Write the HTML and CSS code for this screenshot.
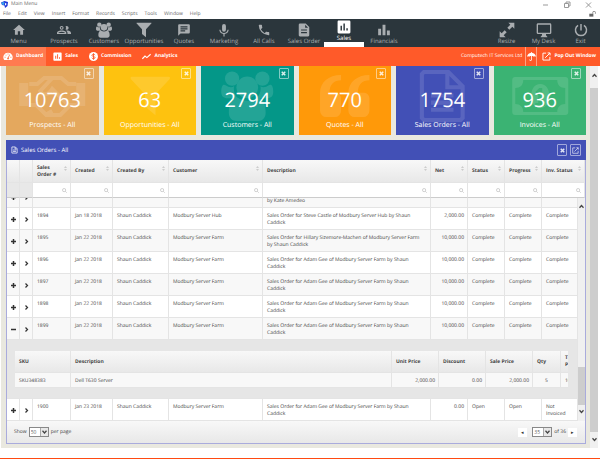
FILE: index.html
```html
<!DOCTYPE html>
<html lang="en">
<head>
    <meta charset="UTF-8">
    <meta name="viewport" content="width=device-width, initial-scale=1.0">
    <title>Main Menu</title>
    <link rel="stylesheet" href="styles.css">
</head>
<body>
    <svg class="sprite" aria-hidden="true">
        <symbol id="i-home" viewBox="0 0 24 24"><path d="M10 20v-6h4v6h5v-8h3L12 3 2 12h3v8z"/></symbol>
        <symbol id="i-people" viewBox="0 0 24 24"><path fill-rule="evenodd" d="M8 5a3.300 3.300 0 1 0 0 6.600a3.300 3.300 0 1 0 0-6.600zM8 6.800a1.500 1.500 0 1 1 0 3a1.500 1.500 0 1 1 0-3zM16.500 5a3.300 3.300 0 1 1-1.800 6a5 5 0 0 0 0-5.400a3.300 3.300 0 0 1 1.800-.6zM8 13c-2.500 0-8 1-8 4v2h16v-2c0-3-5.500-4-8-4zM2 17.200c0-1 3-2.400 6-2.400s6 1.400 6 2.400zM16.500 13c3 0 7.500 1 7.500 4v2h-6v-2c0-1.700-1-3-2.500-3.900z"/></symbol>
        <symbol id="i-users" viewBox="0 0 24 24"><circle cx="5" cy="4" r="3.300"/><circle cx="19" cy="4" r="3.300"/><circle cx="12" cy="8" r="5"/><path d="M5.800 8.500c0 2 .8 3.400 1.800 4.500H3c-2 0-3-1-3-3 0-2.500.8-3.800 2-3 1.400 1 2.800 1.200 3.900.5zM18.200 8.500c0 2-.8 3.400-1.800 4.500H21c2 0 3-1 3-3 0-2.500-.8-3.800-2-3-1.400 1-2.800 1.200-3.900.5zM7.500 12.700c3 2 6 2 9 0 3 .3 4 3.300 4 7 0 2.300-1.500 3.800-3.500 3.800H7c-2 0-3.500-1.500-3.500-3.800 0-3.700 1-6.700 4-7z"/></symbol>
        <symbol id="i-filter" viewBox="0 0 24 24"><path d="M1.500 1h21c.8 0 1 .8.500 1.400L15 11v12l-6-5v-7L1 2.400C.5 1.800.7 1 1.500 1z"/></symbol>
        <symbol id="i-chat" viewBox="0 0 24 24"><path fill-rule="evenodd" d="M4 2h16a2 2 0 0 1 2 2v12a2 2 0 0 1-2 2H6l-4 4V4c0-1.100.9-2 2-2zM6 5.500v2h12v-2zM6 9v2h12V9zM6 12.500v2h8v-2z"/></symbol>
        <symbol id="i-mic" viewBox="0 0 24 24"><path d="M12 15a3.300 3.300 0 0 0 3.300-3.300V5a3.300 3.300 0 0 0-6.600 0v6.700A3.300 3.300 0 0 0 12 15zM18 11.500c0 3.500-2.800 5.500-6 5.500s-6-2-6-5.500H4c0 4 3.200 6.800 7 7.300V23h2v-4.200c3.800-.5 7-3.300 7-7.300z"/></symbol>
        <symbol id="i-phone" viewBox="0 0 24 24"><path d="M6.600 10.800a15 15 0 0 0 6.600 6.600l2.200-2.200c.3-.3.700-.4 1-.2 1.100.4 2.300.6 3.600.6.600 0 1 .4 1 1V20c0 .6-.4 1-1 1A17 17 0 0 1 3 4c0-.6.5-1 1-1h3.500c.6 0 1 .5 1 1 0 1.300.2 2.500.6 3.600.1.300 0 .7-.3 1z"/></symbol>
        <symbol id="i-doc" viewBox="0 0 24 24"><path fill-rule="evenodd" d="M6 1h9l6 6v14a2 2 0 0 1-2 2H5a2 2 0 0 1-2-2V3c0-1 1-2 3-2zM14 3v5h5zM7 11v2h10v-2zM7 15.500v2h10v-2z"/></symbol>
        <symbol id="i-file" viewBox="0 0 24 24"><path fill="none" stroke="currentColor" stroke-width="2.500" d="M3 1.500h12l6 6v15H3zM14 2v6.500h6M7 12h10M7 17h10"/></symbol>
        <symbol id="i-chart" viewBox="0 0 24 24"><path fill-rule="evenodd" d="M3 1h18a2 2 0 0 1 2 2v18a2 2 0 0 1-2 2H3a2 2 0 0 1-2-2V3c0-1.100.9-2 2-2zM6 10v8h2.500v-8zM11 6v12h2.500V6zM16 14v4h2.500v-4z"/></symbol>
        <symbol id="i-bars" viewBox="0 0 24 24"><path d="M2 10h5v11H2zM9.500 3h5v18h-5zM17 13h5v8h-5z"/></symbol>
        <symbol id="i-resize" viewBox="0 0 24 24"><path d="M14 1h9v9l-3-3-4.500 4.500-3-3L17 4zM1 14v9h9l-3-3 4.500-4.500-3-3L4 17z"/></symbol>
        <symbol id="i-desk" viewBox="0 0 24 24"><path fill-rule="evenodd" d="M3 2h18a2 2 0 0 1 2 2v12a2 2 0 0 1-2 2h-6v2l2 2v1H7v-1l2-2v-2H3a2 2 0 0 1-2-2V4c0-1.100.9-2 2-2zM3 4v12h18V4z"/></symbol>
        <symbol id="i-power" viewBox="0 0 24 24"><path fill="none" stroke="currentColor" stroke-width="2.500" d="M12 1.500V13M7 4a9.500 9.500 0 1 0 10 0"/></symbol>
        <symbol id="i-gauge" viewBox="0 0 24 24"><path fill-rule="evenodd" d="M12 2a12 12 0 0 1 10.500 18.500l-.8.500H2.300l-.8-.5A12 12 0 0 1 12 2zM3 12.500v2.500h2.500v-2.500zM5.500 7v2.500H8V7zM10.800 4v2.500h2.500V4zM18.500 12.500v2.500H21v-2.500zM15.700 6.500l-4 8a2.600 2.600 0 1 0 2.200.6l3.500-7.700z"/></symbol>
        <symbol id="i-coin" viewBox="0 0 24 24"><circle cx="12" cy="12" r="12"/><path fill="none" stroke="#ff5a29" stroke-width="2.500" d="M16 8.500C15.500 6.800 14 6 12 6c-2.300 0-4 1.100-4 3s1.500 2.500 4 3 4 1.200 4 3-1.700 3-4 3-3.700-.9-4.200-2.800M12 3.500v17"/></symbol>
        <symbol id="i-trend" viewBox="0 0 24 24"><path fill="none" stroke="currentColor" stroke-width="3" d="M1 18l7-7 5 4L23 6"/></symbol>
        <symbol id="i-umbrella" viewBox="0 0 24 24"><path d="M11 2V0h2v2c6 .5 10 4.500 11 10.500-2-2-4.500-2-6 0-1.200-1.600-3-2-5-1V20c0 5-7 5-7 0h2c0 2.300 3 2.300 3 0v-8.500c-2-1-3.800-.6-5 1-1.500-2-4-2-6 0C1 6.500 5 2.500 11 2z"/></symbol>
        <symbol id="i-popout" viewBox="0 0 24 24"><path fill="none" stroke="currentColor" stroke-width="2.500" d="M11 3H2.500v18.500H21V13M15 2.500h6.500V9M21 3L8.500 15.500"/></symbol>
        <symbol id="i-quote" viewBox="0 0 48 40"><path d="M20 0v5c-7 0-11 4-11 12h6a5 5 0 0 1 5 5v12a6 6 0 0 1-6 6H6a6 6 0 0 1-6-6V17C0 7 8 0 20 0zM47 0v5c-7 0-11 4-11 12h6a5 5 0 0 1 5 5v12a6 6 0 0 1-6 6h-8a6 6 0 0 1-6-6V17C27 7 35 0 47 0z"/></symbol>
        <symbol id="i-page" viewBox="0 0 44 51"><path fill="none" stroke="currentColor" stroke-width="4" d="M4 2h24l14 14v31l-2 2H4l-2-2V4zM27 3v14h14M11 25h22M11 32h22M11 39h22"/></symbol>
        <symbol id="i-note" viewBox="0 0 56 38"><path fill-rule="evenodd" d="M3 0h50a3 3 0 0 1 3 3v32a3 3 0 0 1-3 3H3a3 3 0 0 1-3-3V3a3 3 0 0 1 3-3zM11 3c0 5-3 8-8 8v16c5 0 8 3 8 8h34c0-5 3-8 8-8V11c-5 0-8-3-8-8z"/><path fill-rule="evenodd" d="M28 7c6 0 9 5 9 12s-3 12-9 12-9-5-9-12 3-12 9-12zM23 15l3 2v9h-3v3h10v-3h-3V11h-3z"/></symbol>
        <symbol id="i-hands" viewBox="0 0 66 42"><path d="M0 8h9v23H0zM57 8h9v23h-9z"/><path fill="none" stroke="currentColor" stroke-width="4" d="M10 9h8l7-6h8l-12 13c3 6 9 3 12-2l17 17-9 9H27L17 30h-7M33 3h9l7 6h8M57 30h-8M26 40l7-4"/></symbol>
        <symbol id="i-lock" viewBox="0 0 24 20"><path d="M1 9h14v10H1z"/><path fill="none" stroke="currentColor" stroke-width="2.500" d="M13 9V5a4.500 4.500 0 0 1 9 0v4"/></symbol>
        <symbol id="i-x" viewBox="0 0 10 10"><path fill="none" stroke="currentColor" stroke-width="3" d="M1.500 1.500l7 7M8.500 1.500l-7 7"/></symbol>
        <symbol id="i-search" viewBox="0 0 10 10"><path fill="none" stroke="currentColor" stroke-width="1.300" d="M4.200 1a3.200 3.200 0 1 0 0 6.400a3.200 3.200 0 1 0 0-6.400zM6.500 6.500L9.500 9.500"/></symbol>
        <symbol id="i-sort" viewBox="0 0 6 10"><path d="M0 4l3-4 3 4zM0 6l3 4 3-4z"/></symbol>
        <symbol id="i-plus" viewBox="0 0 10 10"><path d="M3.500 0h3v3.500H10v3H6.500V10h-3V6.500H0v-3h3.500z"/></symbol>
        <symbol id="i-minus" viewBox="0 0 10 10"><path d="M0 3.500h10v3H0z"/></symbol>
        <symbol id="i-right" viewBox="0 0 10 10"><path fill="none" stroke="currentColor" stroke-width="2.500" d="M3 1l4 4-4 4"/></symbol>
        <symbol id="i-up" viewBox="0 0 10 10"><path fill="none" stroke="currentColor" stroke-width="2.500" d="M1 7.500l4-4.500 4 4.500"/></symbol>
        <symbol id="i-down" viewBox="0 0 10 10"><path fill="none" stroke="currentColor" stroke-width="2.500" d="M1 2.500L5 7l4-4.500"/></symbol>
    </svg>

    <header class="titlebar">
        <svg class="app-icon" viewBox="0 0 14 14"><path fill="#1d35d8" d="M0 3l7-3 7 2-1 8-5 4-1-5-5-1z"/><path fill="#37a5ee" d="M1 3l6-1-1 6-4-1z"/><path fill="#fff" d="M8 4l3 1-1 4-2-1z"/></svg>
        <span>Main Menu</span>
        <svg class="win-buttons" viewBox="0 0 50 8"><path fill="none" stroke="#999" d="M1 4h5M22.500 2.500h4v4h-4zM24 2V1h4v4h-1M44 1.500l5 5M49 1.500l-5 5"/></svg>
    </header>
    <nav class="menubar">
        <a href="#">File</a>
        <a href="#">Edit</a>
        <a href="#">View</a>
        <a href="#">Insert</a>
        <a href="#">Format</a>
        <a href="#">Records</a>
        <a href="#">Scripts</a>
        <a href="#">Tools</a>
        <a href="#">Window</a>
        <a href="#">Help</a>
        <svg class="lock"><use href="#i-lock"/></svg>
    </nav>

    <nav class="navbar">
        <a class="side first" href="#"><svg><use href="#i-home"/></svg>Menu</a>
        <a href="#"><svg><use href="#i-people"/></svg>Prospects</a>
        <a href="#"><svg class="big"><use href="#i-users"/></svg>Customers</a>
        <a href="#"><svg class="big"><use href="#i-filter"/></svg>Opportunities</a>
        <a href="#"><svg><use href="#i-chat"/></svg>Quotes</a>
        <a href="#"><svg><use href="#i-mic"/></svg>Marketing</a>
        <a href="#"><svg><use href="#i-phone"/></svg>All Calls</a>
        <a href="#"><svg><use href="#i-doc"/></svg>Sales Order</a>
        <a class="active" href="#"><svg><use href="#i-chart"/></svg>Sales</a>
        <a href="#"><svg><use href="#i-bars"/></svg>Financials</a>
        <a class="side push" href="#"><svg class="big"><use href="#i-resize"/></svg>Resize</a>
        <a class="side" href="#"><svg class="big"><use href="#i-desk"/></svg>My Desk</a>
        <a class="side" href="#"><svg><use href="#i-power"/></svg>Exit</a>
    </nav>

    <nav class="subnav">
        <a class="tab current" href="#"><svg class="wide"><use href="#i-gauge"/></svg>Dashboard</a>
        <a class="tab" href="#"><svg><use href="#i-chart"/></svg>Sales</a>
        <a class="tab" href="#"><svg><use href="#i-coin"/></svg>Commission</a>
        <a class="tab" href="#"><svg><use href="#i-trend"/></svg>Analytics</a>
        <span class="company">Computech IT Services Ltd</span>
        <button class="umbrella" aria-label="Holidays"><svg><use href="#i-umbrella"/></svg></button>
        <a class="popout" href="#"><svg><use href="#i-popout"/></svg>Pop Out Window</a>
    </nav>

    <div class="workspace">
        <main class="content">
            <section class="cards">
                <div class="card prospects">
                    <svg class="art"><use href="#i-hands"/></svg>
                    <button class="close" aria-label="Close"><svg><use href="#i-x"/></svg></button>
                    <strong>10763</strong><span>Prospects - All</span>
                </div>
                <div class="card opportunities">
                    <svg class="art"><use href="#i-filter"/></svg>
                    <button class="close" aria-label="Close"><svg><use href="#i-x"/></svg></button>
                    <strong>63</strong><span>Opportunities - All</span>
                </div>
                <div class="card customers">
                    <svg class="art tall"><use href="#i-users"/></svg>
                    <button class="close" aria-label="Close"><svg><use href="#i-x"/></svg></button>
                    <strong>2794</strong><span>Customers - All</span>
                </div>
                <div class="card quotes">
                    <svg class="art"><use href="#i-quote"/></svg>
                    <button class="close" aria-label="Close"><svg><use href="#i-x"/></svg></button>
                    <strong>770</strong><span>Quotes - All</span>
                </div>
                <div class="card orders">
                    <svg class="art tall"><use href="#i-page"/></svg>
                    <button class="close" aria-label="Close"><svg><use href="#i-x"/></svg></button>
                    <strong>1754</strong><span>Sales Orders - All</span>
                </div>
                <div class="card invoices">
                    <svg class="art note"><use href="#i-note"/></svg>
                    <button class="close" aria-label="Close"><svg><use href="#i-x"/></svg></button>
                    <strong>936</strong><span>Invoices - All</span>
                </div>
            </section>

            <section class="panel">
                <div class="panel-head">
                    <svg><use href="#i-file"/></svg>
                    <h2>Sales Orders - All</h2>
                    <button class="close" aria-label="Close"><svg><use href="#i-x"/></svg></button>
                    <button class="close" aria-label="Open in window"><svg><use href="#i-popout"/></svg></button>
                </div>

                <table class="grid head">
                    <colgroup><col class="c-btn"><col class="c-btn"><col class="c-num"><col class="c-date"><col class="c-by"><col class="c-cust"><col><col class="c-net"><col class="c-net"><col class="c-net"><col class="c-inv"></colgroup>
                    <thead>
                        <tr>
                            <th></th>
                            <th></th>
                            <th>Sales<br>Order #<svg><use href="#i-sort"/></svg></th>
                            <th>Created<svg><use href="#i-sort"/></svg></th>
                            <th>Created By<svg><use href="#i-sort"/></svg></th>
                            <th>Customer<svg><use href="#i-sort"/></svg></th>
                            <th>Description<svg><use href="#i-sort"/></svg></th>
                            <th>Net<svg><use href="#i-sort"/></svg></th>
                            <th>Status<svg><use href="#i-sort"/></svg></th>
                            <th>Progress<svg><use href="#i-sort"/></svg></th>
                            <th>Inv. Status<svg><use href="#i-sort"/></svg></th>
                        </tr>
                        <tr class="filters">
                            <td></td>
                            <td></td>
                            <td><label><input type="text" aria-label="Filter sales order"><svg><use href="#i-search"/></svg></label></td>
                            <td><label><input type="text" aria-label="Filter created"><svg><use href="#i-search"/></svg></label></td>
                            <td><label><input type="text" aria-label="Filter created by"><svg><use href="#i-search"/></svg></label></td>
                            <td><label><input type="text" aria-label="Filter customer"><svg><use href="#i-search"/></svg></label></td>
                            <td><label><input type="text" aria-label="Filter description"><svg><use href="#i-search"/></svg></label></td>
                            <td><label><input type="text" aria-label="Filter net"><svg><use href="#i-search"/></svg></label></td>
                            <td><label><input type="text" aria-label="Filter status"><svg><use href="#i-search"/></svg></label></td>
                            <td><label><input type="text" aria-label="Filter progress"><svg><use href="#i-search"/></svg></label></td>
                            <td><label><input type="text" aria-label="Filter invoice status"><svg><use href="#i-search"/></svg></label></td>
                        </tr>
                    </thead>
                </table>

                <div class="grid-body">
                    <div class="rows">
                        <table class="grid">
                            <colgroup><col class="c-btn"><col class="c-btn"><col class="c-num"><col class="c-date"><col class="c-by"><col class="c-cust"><col><col class="c-net"><col class="c-net"><col class="c-net"><col class="c-status"></colgroup>
                            <tbody>
                                <tr class="alt">
                                    <td class="btn"><button aria-label="Expand"><svg><use href="#i-plus"/></svg></button></td>
                                    <td class="btn"><button aria-label="Open"><svg><use href="#i-right"/></svg></button></td>
                                    <td></td><td></td><td></td><td></td>
                                    <td><br>by Kate Amedeo</td>
                                    <td></td><td></td><td></td><td></td>
                                </tr>
                                <tr>
                                    <td class="btn"><button aria-label="Expand"><svg><use href="#i-plus"/></svg></button></td>
                                    <td class="btn"><button aria-label="Open"><svg><use href="#i-right"/></svg></button></td>
                                    <td>1894</td><td>Jan 18 2018</td><td>Shaun Caddick</td><td>Modbury Server Hub</td>
                                    <td>Sales Order for Steve Castle of Modbury Server Hub by Shaun Caddick</td>
                                    <td class="num">2,000.00</td><td>Complete</td><td>Complete</td><td>Complete</td>
                                </tr>
                                <tr class="alt">
                                    <td class="btn"><button aria-label="Expand"><svg><use href="#i-plus"/></svg></button></td>
                                    <td class="btn"><button aria-label="Open"><svg><use href="#i-right"/></svg></button></td>
                                    <td>1895</td><td>Jan 22 2018</td><td>Shaun Caddick</td><td>Modbury Server Farm</td>
                                    <td>Sales Order for Hillary Sizemore-Machen of Modbury Server Farm by Shaun Caddick</td>
                                    <td class="num">10,000.00</td><td>Complete</td><td>Complete</td><td>Complete</td>
                                </tr>
                                <tr>
                                    <td class="btn"><button aria-label="Expand"><svg><use href="#i-plus"/></svg></button></td>
                                    <td class="btn"><button aria-label="Open"><svg><use href="#i-right"/></svg></button></td>
                                    <td>1896</td><td>Jan 22 2018</td><td>Shaun Caddick</td><td>Modbury Server Farm</td>
                                    <td>Sales Order for Adam Gee of Modbury Server Farm by Shaun Caddick</td>
                                    <td class="num">10,000.00</td><td>Complete</td><td>Complete</td><td>Complete</td>
                                </tr>
                                <tr class="alt">
                                    <td class="btn"><button aria-label="Expand"><svg><use href="#i-plus"/></svg></button></td>
                                    <td class="btn"><button aria-label="Open"><svg><use href="#i-right"/></svg></button></td>
                                    <td>1897</td><td>Jan 22 2018</td><td>Shaun Caddick</td><td>Modbury Server Farm</td>
                                    <td>Sales Order for Adam Gee of Modbury Server Farm by Shaun Caddick</td>
                                    <td class="num">10,000.00</td><td>Complete</td><td>Complete</td><td>Complete</td>
                                </tr>
                                <tr>
                                    <td class="btn"><button aria-label="Expand"><svg><use href="#i-plus"/></svg></button></td>
                                    <td class="btn"><button aria-label="Open"><svg><use href="#i-right"/></svg></button></td>
                                    <td>1898</td><td>Jan 22 2018</td><td>Shaun Caddick</td><td>Modbury Server Farm</td>
                                    <td>Sales Order for Adam Gee of Modbury Server Farm by Shaun Caddick</td>
                                    <td class="num">10,000.00</td><td>Complete</td><td>Complete</td><td>Complete</td>
                                </tr>
                                <tr class="alt">
                                    <td class="btn"><button aria-label="Collapse"><svg><use href="#i-minus"/></svg></button></td>
                                    <td class="btn"><button aria-label="Open"><svg><use href="#i-right"/></svg></button></td>
                                    <td>1899</td><td>Jan 22 2018</td><td>Shaun Caddick</td><td>Modbury Server Farm</td>
                                    <td>Sales Order for Adam Gee of Modbury Server Farm by Shaun Caddick</td>
                                    <td class="num">10,000.00</td><td>Complete</td><td>Complete</td><td>Complete</td>
                                </tr>
                                <tr class="detail">
                                    <td colspan="11">
                                        <div class="lines">
                                            <table class="grid">
                                                <colgroup><col class="d-sku"><col><col class="d-price"><col class="d-price"><col class="d-price"><col class="d-qty"><col class="d-total"></colgroup>
                                                <thead>
                                                    <tr><th>SKU</th><th>Description</th><th>Unit Price</th><th>Discount</th><th>Sale Price</th><th>Qty</th><th>T.<br>P</th></tr>
                                                </thead>
                                                <tbody>
                                                    <tr><td>SKU348383</td><td>Dell T630 Server</td><td class="num">2,000.00</td><td class="num">0.00</td><td class="num">2,000.00</td><td class="mid">5</td><td>10</td></tr>
                                                </tbody>
                                            </table>
                                        </div>
                                    </td>
                                </tr>
                                <tr>
                                    <td class="btn"><button aria-label="Expand"><svg><use href="#i-plus"/></svg></button></td>
                                    <td class="btn"><button aria-label="Open"><svg><use href="#i-right"/></svg></button></td>
                                    <td>1900</td><td>Jan 23 2018</td><td>Shaun Caddick</td><td>Modbury Server Farm</td>
                                    <td>Sales Order for Adam Gee of Modbury Server Farm by Shaun Caddick</td>
                                    <td class="num">0.00</td><td>Open</td><td>Open</td><td>Not<br>Invoiced</td>
                                </tr>
                            </tbody>
                        </table>
                    </div>
                    <div class="scroll inner">
                        <svg><use href="#i-up"/></svg>
                        <div class="thumb"></div>
                        <svg><use href="#i-down"/></svg>
                    </div>
                </div>

                <footer class="pager">
                    <label for="perPage">Show</label>
                    <span class="pick"><select id="perPage"><option>50</option></select><svg><use href="#i-down"/></svg></span>
                    <span>per page</span>
                    <button class="prev" aria-label="Previous page">◂</button>
                    <span class="pick"><select aria-label="Page"><option>35</option></select><svg><use href="#i-down"/></svg></span>
                    <span>of 36</span>
                    <button aria-label="Next page">▸</button>
                </footer>
            </section>
        </main>
        <div class="scroll outer">
            <svg><use href="#i-up"/></svg>
            <div class="thumb"></div>
            <svg><use href="#i-down"/></svg>
        </div>
    </div>
    <div class="bottom-line"></div>
</body>
</html>
```
FILE: styles.css
```css
* {
    box-sizing: border-box;
}
body {
    margin: 0;
    min-height: 100vh;
    display: flex;
    flex-direction: column;
    background-color: #fff;
    color: #444;
    font-family: "Open Sans", "Noto Sans", sans-serif;
    font-size: 5px;
    line-height: 7px;
    text-rendering: geometricPrecision;
}
svg {
    fill: currentColor;
    display: block;
    flex: none;
}
a {
    color: inherit;
    text-decoration: none;
}
button {
    display: flex;
    align-items: center;
    justify-content: center;
    padding: 0;
    border: none;
    background: none;
    color: inherit;
    font: inherit;
    cursor: pointer;
}
.sprite {
    position: absolute;
    width: 0;
    height: 0;
}

/* window title and menu */
.titlebar {
    display: flex;
    align-items: center;
    height: 9px;
    padding: 0 8px 0 1px;
    color: #666;
}
.app-icon {
    width: 7px;
    height: 7px;
    margin-right: 3px;
}
.win-buttons {
    width: 50px;
    height: 8px;
    margin-left: auto;
}
.menubar {
    display: flex;
    align-items: center;
    gap: 7px;
    height: 10px;
    padding: 0 4px 0 3px;
    color: #666;
}
.lock {
    width: 7px;
    height: 6px;
    margin-left: auto;
}

/* main navigation */
.navbar {
    display: flex;
    height: 28px;
    padding-right: 1px;
    background-color: #2b363c;
    color: #a9adb0;
    font-size: 6px;
}
.navbar a {
    width: 40px;
    padding-top: 3px;
    display: flex;
    flex-direction: column;
    align-items: center;
    white-space: nowrap;
}
.navbar svg {
    width: 14px;
    height: 16px;
}
.navbar .big {
    width: 16px;
}
.navbar .side {
    width: 37px;
}
.navbar .first {
    margin-right: 7px;
}
.navbar .push {
    margin-left: auto;
}
.navbar .active {
    padding-top: 0;
    border-bottom: 5px solid #fff;
    color: #fff;
}

/* orange bar */
.subnav {
    display: flex;
    align-items: stretch;
    height: 19px;
    background-color: #ff5a29;
    color: #fff;
    font-weight: bold;
}
.subnav a {
    display: flex;
    align-items: center;
    gap: 3px;
}
.subnav svg {
    width: 9px;
    height: 9px;
}
.subnav .wide {
    width: 10px;
}
.subnav .tab {
    padding: 0 4px 0 7px;
}
.subnav .current {
    padding: 0 3px;
    background-color: #ff7a50;
}
.company {
    align-self: center;
    margin-left: auto;
    padding-right: 3px;
    font-weight: normal;
}
.umbrella {
    width: 12px;
    border: solid #ffa284;
    border-width: 0 1px;
}
.subnav .popout {
    padding: 0 4px 0 5px;
}

/* dashboard */
.workspace {
    flex: 1;
    display: flex;
    padding: 0 2px 0 1px;
}
.content {
    flex: 1;
    min-width: 0;
    padding: 0 4px 4px 5px;
    background-color: #e9e8df;
}
.cards {
    display: grid;
    grid-template-columns: repeat(6, 1fr);
    gap: 5px;
    margin-bottom: 5px;
}
.card {
    position: relative;
    display: flex;
    flex-direction: column;
    align-items: center;
    padding: 20px 0 5px;
    color: #fff;
    font-size: 7px;
    line-height: 8px;
}
.card strong {
    margin-bottom: 8px;
    font-size: 20px;
    font-weight: normal;
    line-height: 28px;
}
.card .art {
    position: absolute;
    inset: 9px 8px auto;
    width: calc(100% - 16px);
    height: 42px;
    opacity: 0.12;
}
.card .tall {
    inset: 4px 8px auto;
    height: 52px;
}
.card .note {
    inset: 11px 8px auto;
    height: 38px;
}
.close {
    width: 10px;
    height: 12px;
    border: 1px solid rgba(255, 255, 255, 0.5);
    border-radius: 1px;
    color: rgba(255, 255, 255, 0.85);
}
.close svg {
    width: 5px;
    height: 5px;
}
.card .close {
    position: absolute;
    top: 2px;
    right: 5px;
    height: 11px;
}
.prospects { background-color: #e4a85e; }
.opportunities { background-color: #fec20f; }
.customers { background-color: #049788; }
.quotes { background-color: #ff9909; }
.orders { background-color: #4250b6; }
.invoices { background-color: #3bb373; }

/* sales orders panel */
.panel {
    border: 1px solid #a9abdc;
    border-top: none;
    background-color: #fff;
}
.panel-head {
    display: flex;
    align-items: center;
    gap: 3px;
    height: 20px;
    margin: 0 -1px;
    padding: 0 5px;
    background-color: #4250b6;
    color: #fff;
}
.panel-head > svg {
    width: 7px;
    height: 8px;
}
.panel-head h2 {
    margin: 0 auto 0 0;
    font-size: 6px;
    font-weight: normal;
    line-height: 8px;
}
.panel-head .close:last-child {
    width: 11px;
}
.panel-head .close:last-child svg {
    width: 7px;
    height: 7px;
}

.grid {
    width: 100%;
    table-layout: fixed;
    border-collapse: separate;
    border-spacing: 0;
}
.c-btn { width: 13px; }
.c-num { width: 38px; }
.c-date { width: 42px; }
.c-by { width: 56px; }
.c-cust { width: 94px; }
.c-net { width: 37px; }
.c-inv { width: 43px; }
.c-status { width: 36px; }

.grid th,
.grid td {
    border: solid #e4e4e4;
    border-width: 0 1px 1px 0;
    text-align: left;
}
.grid th {
    position: relative;
    height: 23px;
    padding: 1px 3px 0 4px;
    background: linear-gradient(#f8f8f8, #e8e8e8);
    font-weight: bold;
    vertical-align: middle;
}
.grid th svg {
    position: absolute;
    top: 6px;
    right: 3px;
    width: 3px;
    height: 5px;
    color: #ccc;
}
.grid td {
    padding: 5px 6px 2px 4px;
    vertical-align: top;
}
.grid .filters td {
    height: 15px;
    padding: 0;
    border-bottom-color: #ccc;
    background-color: #fff;
}
.grid .filters td:nth-child(-n+2) {
    background-color: #e8e8e8;
}
.filters label {
    display: flex;
    align-items: center;
    padding-right: 3px;
}
.filters input {
    flex: 1;
    min-width: 0;
    height: 14px;
    padding: 0 3px;
    border: none;
    background: none;
    font: inherit;
}
.filters svg {
    width: 5px;
    height: 5px;
    color: #bbb;
}
.grid .alt td {
    background-color: #f8f8f8;
}
.grid .btn {
    padding: 2px 0 0;
    vertical-align: middle;
}
.btn button {
    width: 100%;
    color: #333;
}
.btn svg {
    width: 5px;
    height: 5px;
}
.grid .num {
    padding-right: 3px;
    text-align: right;
}
.grid .mid {
    padding-right: 4px;
    text-align: center;
}

.grid-body {
    display: flex;
}
/* the list is scrolled half way into its first row */
.rows {
    flex: 1;
    min-width: 0;
    overflow: hidden;
}
.rows > .grid {
    margin-top: -12px;
}
.grid .detail > td {
    padding: 11px 9px 10px 8px;
    background-color: #e6e6e6;
}
.lines {
    overflow: hidden;
}
.lines .grid {
    width: calc(100% + 21px);
}
.lines td {
    height: 14px;
    background-color: #f8f8f8;
}
.grid .lines th {
    height: 22px;
}
.d-sku { width: 56px; }
.d-price { width: 47px; }
.d-qty { width: 28px; }
.d-total { width: 28px; }

/* scroll bars */
.scroll {
    display: flex;
    flex-direction: column;
    align-items: center;
    background-color: #f0f0f0;
    color: #444;
}
.scroll svg {
    width: 5px;
    height: 5px;
}
.scroll .thumb {
    width: 100%;
    background-color: #cdcdcd;
}
.inner {
    width: 7px;
    padding: 6px 0 7px;
}
.inner .thumb {
    height: 38px;
    margin: auto 0 4px;
}
.outer {
    width: 8px;
    padding: 7px 0 6px;
}
.outer .thumb {
    flex: 1;
    margin: 10px 0 5px;
}

/* paging footer */
.pager {
    display: flex;
    align-items: center;
    gap: 2px;
    height: 22px;
    padding: 0 8px 0 7px;
    background: linear-gradient(#f8f8f8, #e8e8e8);
}
.pick {
    position: relative;
    display: flex;
}
.pick select {
    appearance: none;
    width: 20px;
    height: 10px;
    padding: 0 9px 0 1px;
    border: 1px solid #888;
    border-radius: 0;
    background-color: #fff;
    color: #666;
    font: inherit;
}
.pick svg {
    position: absolute;
    top: 1px;
    right: 1px;
    width: 8px;
    height: 8px;
    padding: 1px;
    border-left: 1px solid #aaa;
    background-color: #e8e8e8;
    pointer-events: none;
}
.pager button {
    width: 9px;
    height: 9px;
    background-color: #fff;
    color: #333;
}
.pager .prev {
    margin: 0 3px 0 auto;
}
.bottom-line {
    height: 2px;
    margin-top: 10px;
    background-color: #ff4a12;
}
```
